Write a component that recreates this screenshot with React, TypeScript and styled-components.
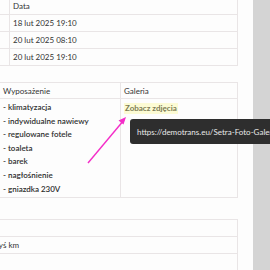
import React from "react";
import styled, { createGlobalStyle } from "styled-components";

const Global = createGlobalStyle`
  html, body { margin: 0; padding: 0; background: #fdfdfd; }
  body { font-family: Lato, "Liberation Sans", sans-serif; font-size: 8px; color: #333; }
`;

const Page = styled.div`
  position: relative;
  width: 270px;
  height: 270px;
  overflow: hidden;
  display: flex;
  background: #fdfdfd;
`;

const Main = styled.div`
  margin-left: -20px;
  width: 258px;
  flex: none;
  display: flex;
  flex-direction: column;
`;

const Gutter = styled.div`
  width: 15px;
  flex: none;
`;

const Scrollbar = styled.div`
  width: 17px;
  flex: none;
  background: #d4d4d4;
`;

const Table = styled.div<{ $cols: string; $top: number; $inset?: number }>`
  display: grid;
  grid-template-columns: ${(p) => p.$cols};
  margin-top: ${(p) => p.$top}px;
  margin-left: ${(p) => p.$inset ?? 0}px;
  border: 1px solid #e9e5e6;
  border-bottom: none;
`;

const Cell = styled.div<{ $h?: number; $divider?: boolean }>`
  height: ${(p) => p.$h ?? 16}px;
  border-bottom: 1px solid #e9e5e6;
  border-left: ${(p) => (p.$divider ? "1px solid #e9e5e6" : "none")};
  padding: 0 3px;
  display: flex;
  align-items: center;
  white-space: nowrap;
  color: #333;
`;

const ListCell = styled.div<{ $divider?: boolean }>`
  height: 99px;
  box-sizing: border-box;
  padding: 2px 3px;
  border-bottom: 1px solid #e9e5e6;
  border-left: ${(p) => (p.$divider ? "1px solid #e9e5e6" : "none")};
`;

const Item = styled.div`
  line-height: 13.6px;
  font-weight: 600;
  color: #2e2e2e;
  white-space: nowrap;
`;

const Link = styled.a`
  display: inline-block;
  margin-top: 2px;
  line-height: 11px;
  padding: 0 1px;
  font-weight: 700;
  color: #7d7c55;
  background: #fcfbd4;
  text-decoration: none;
`;

const Tooltip = styled.div`
  position: absolute;
  left: 130px;
  top: 119px;
  width: max-content;
  height: 25px;
  padding: 0 7px;
  border-radius: 3px;
  background: #2e2e2e;
  color: #e8e8e8;
  font-size: 8px;
  display: flex;
  align-items: center;
  white-space: nowrap;
`;

const Arrow = styled.svg`
  position: absolute;
  left: 80px;
  top: 110px;
`;

export default function App() {
  return (
    <Page>
      <Global />
      <Main>
        <Table $cols="28px 1fr" $top={-3}>
          <Cell />
          <Cell $divider>Data</Cell>
          <Cell />
          <Cell $divider>18 lut 2025 19:10</Cell>
          <Cell />
          <Cell $divider>20 lut 2025 08:10</Cell>
          <Cell />
          <Cell $divider>20 lut 2025 19:10</Cell>
        </Table>

        <Table $cols="120px 1fr" $top={16} $inset={19}>
          <Cell $h={15}>Wyposażenie</Cell>
          <Cell $h={15} $divider>Galeria</Cell>
          <ListCell>
            <Item>- klimatyzacja</Item>
            <Item>- indywidualne nawiewy</Item>
            <Item>- regulowane fotele</Item>
            <Item>- toaleta</Item>
            <Item>- barek</Item>
            <Item>- nagłośnienie</Item>
            <Item>- gniazdka 230V</Item>
          </ListCell>
          <ListCell $divider>
            <Link href="#">Zobacz zdjęcia</Link>
          </ListCell>
        </Table>

        <Table $cols="1fr" $top={21}>
          <Cell />
          <Cell>
            <span style={{ marginLeft: 12 }}>tyś km</span>
          </Cell>
          <Cell />
        </Table>
      </Main>
      <Gutter />
      <Scrollbar />

      <Tooltip>https://demotrans.eu/Setra-Foto-Galeria</Tooltip>
      <Arrow width="60" height="60" viewBox="0 0 60 60">
        <line x1="8" y1="53" x2="44" y2="10" stroke="#f42dc8" strokeWidth="1.4" />
        <polygon points="46,7 38.5,10.5 43.5,14.5" fill="#f42dc8" />
      </Arrow>
    </Page>
  );
}
